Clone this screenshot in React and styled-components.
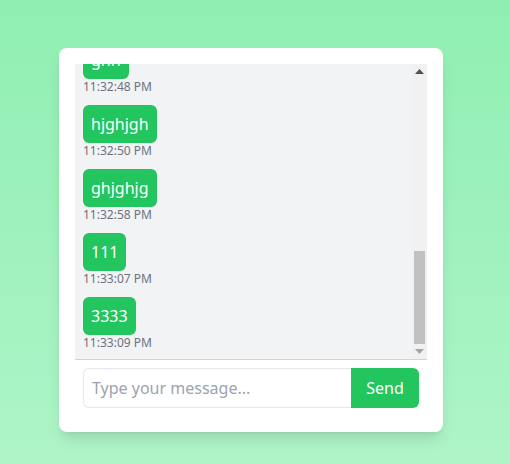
import React, { useEffect, useRef, useState } from "react";
import styled, { createGlobalStyle } from "styled-components";

const GlobalStyle = createGlobalStyle`
  html, body {
    margin: 0;
    padding: 0;
    height: 100%;
  }
  body {
    font-family: "Noto Sans", "Open Sans", sans-serif;
    background: linear-gradient(to bottom, #8fefb2, #aef4c7);
    min-height: 464px;
  }
  * { box-sizing: border-box; }
`;

const Page = styled.div`
  padding: 48px 0 0 59px;
`;

const Card = styled.div`
  width: 384px;
  background: #ffffff;
  border-radius: 8px;
  padding: 16px;
  box-shadow: 0 10px 15px -3px rgba(0, 0, 0, 0.1), 0 4px 6px -4px rgba(0, 0, 0, 0.1);
`;

const MessagesFrame = styled.div`
  position: relative;
  border-bottom: 1px solid #d1d5db;
`;

const Messages = styled.div`
  height: 295px;
  overflow-y: scroll;
  background: #f2f3f5;
  padding: 8px 23px 8px 8px;
  scrollbar-width: none;
  &::-webkit-scrollbar { display: none; }
`;

const ScrollBar = styled.div`
  position: absolute;
  top: 0;
  right: 0;
  bottom: 0;
  width: 15px;
  background: #f1f1f1;
  display: flex;
  flex-direction: column;
  justify-content: space-between;
`;

const ArrowButton = styled.div`
  height: 15px;
  display: flex;
  align-items: center;
  justify-content: center;
`;

const Thumb = styled.div`
  position: absolute;
  left: 2px;
  right: 2px;
  background: #c1c1c1;
`;

const Group = styled.div`
  display: flex;
  flex-direction: column;
  align-items: flex-start;
  margin-bottom: 10px;
  &:last-child { margin-bottom: 0; }
`;

const Bubble = styled.div`
  background: #22c55e;
  color: #ffffff;
  font-size: 16px;
  line-height: 24px;
  padding: 7px 8px;
  border-radius: 6px;
`;

const Time = styled.span`
  font-size: 12px;
  line-height: 16px;
  color: #6b7280;
`;

const Form = styled.form`
  display: flex;
  padding: 8px;
`;

const Input = styled.input`
  flex: 1;
  min-width: 0;
  height: 40px;
  border: 1px solid #e5e7eb;
  border-right: none;
  border-radius: 6px 0 0 6px;
  padding: 0 8px;
  font-family: inherit;
  font-size: 16px;
  color: #111827;
  outline: none;
  &::placeholder { color: #9ca3af; }
`;

const SendButton = styled.button`
  height: 40px;
  width: 68px;
  border: none;
  border-radius: 0 6px 6px 0;
  background: #22c55e;
  color: #ffffff;
  font-family: inherit;
  font-size: 16px;
  cursor: pointer;
`;

const messages = [
  { text: "hello", time: "11:31:02 PM" },
  { text: "hi", time: "11:31:10 PM" },
  { text: "test", time: "11:31:25 PM" },
  { text: "asdasd", time: "11:31:40 PM" },
  { text: "fghfgh", time: "11:31:55 PM" },
  { text: "jkjkjk", time: "11:32:08 PM" },
  { text: "dfgdfg", time: "11:32:20 PM" },
  { text: "hhh", time: "11:32:36 PM" },
  { text: "ghh", time: "11:32:48 PM" },
  { text: "hjghjgh", time: "11:32:50 PM" },
  { text: "ghjghjg", time: "11:32:58 PM" },
  { text: "111", time: "11:33:07 PM" },
  { text: "3333", time: "11:33:09 PM" },
];

export default function App() {
  const ref = useRef(null);
  const [thumb, setThumb] = useState({ top: 188, height: 91 });

  const update = () => {
    const el = ref.current;
    if (!el) return;
    const track = el.clientHeight - 30;
    const h = Math.max(20, Math.round((track * el.clientHeight) / el.scrollHeight));
    const max = el.scrollHeight - el.clientHeight;
    const t = 15 + (max > 0 ? Math.round(((track - h) * el.scrollTop) / max) : 0);
    setThumb({ top: t, height: h });
  };

  useEffect(() => {
    if (ref.current) ref.current.scrollTop = ref.current.scrollHeight;
    update();
  }, []);

  return (
    <>
      <GlobalStyle />
      <Page>
        <Card>
          <MessagesFrame>
            <Messages ref={ref} onScroll={update}>
              {messages.map((m, i) => (
                <Group key={i}>
                  <Bubble>{m.text}</Bubble>
                  <Time>{m.time}</Time>
                </Group>
              ))}
            </Messages>
            <ScrollBar>
              <ArrowButton>
                <svg width="9" height="5" viewBox="0 0 9 5">
                  <polygon points="0,5 9,5 4.5,0" fill="#505050" />
                </svg>
              </ArrowButton>
              <Thumb style={{ top: thumb.top, height: thumb.height }} />
              <ArrowButton>
                <svg width="9" height="5" viewBox="0 0 9 5">
                  <polygon points="0,0 9,0 4.5,5" fill="#a3a3a3" />
                </svg>
              </ArrowButton>
            </ScrollBar>
          </MessagesFrame>
          <Form onSubmit={(e) => e.preventDefault()}>
            <Input placeholder="Type your message..." />
            <SendButton type="submit">Send</SendButton>
          </Form>
        </Card>
      </Page>
    </>
  );
}
